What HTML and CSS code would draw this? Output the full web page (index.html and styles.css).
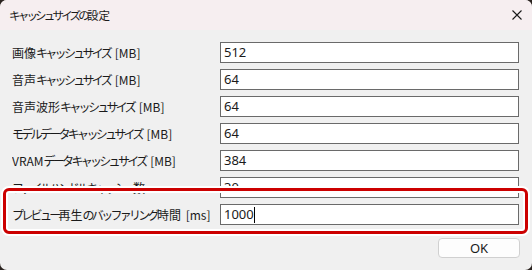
FILE: index.html
```html
<!DOCTYPE html>
<html lang="ja">
<head>
    <meta charset="UTF-8">
    <title>キャッシュサイズの設定</title>
    <link rel="stylesheet" href="styles.css">
</head>
<body>

<div class="window">
    <div class="titlebar">
        <span class="title"><span class="kana">キャッシュサイズの</span>設定</span>
        <svg class="close" width="10" height="10" viewBox="0 0 10 10">
            <path d="M0.5 0.5 L9.5 9.5 M9.5 0.5 L0.5 9.5" stroke="#1a1a1a" stroke-width="1.1" fill="none"/>
        </svg>
    </div>

    <div class="content">
        <div class="rows">
            <div class="label">画像<span class="kana">キャッシュサイズ</span> <span class="unit">[MB]</span></div>
            <div class="field">512</div>

            <div class="label">音声<span class="kana">キャッシュサイズ</span> <span class="unit">[MB]</span></div>
            <div class="field">64</div>

            <div class="label">音声波形<span class="kana">キャッシュサイズ</span> <span class="unit">[MB]</span></div>
            <div class="field">64</div>

            <div class="label"><span class="kana">モデルデータキャッシュサイズ</span> <span class="unit">[MB]</span></div>
            <div class="field">64</div>

            <div class="label">VRAM<span class="kana">データキャッシュサイズ</span> <span class="unit">[MB]</span></div>
            <div class="field">384</div>

            <div class="label"><span class="kana">ファイルハンドルキャッシュ</span>数</div>
            <div class="field">30</div>

            <div class="label"><span class="kana">プレビュー</span>再生<span class="kana">のバッファリング</span>時間 <span class="unit">[ms]</span></div>
            <div class="field">1000<span class="caret"></span></div>
        </div>

        <div class="buttons">
            <button class="btn">OK</button>
        </div>

        <!-- highlight drawn over the last row -->
        <div class="highlight"></div>
    </div>
</div>

</body>
</html>
```

FILE: styles.css
```css
html {
    background: #2b2420;
}
body {
    margin: 0;
    width: 532px;
    height: 270px;
    overflow: hidden;
    font-family: "Noto Sans CJK JP", "Noto Sans", sans-serif;
    color: #1a1a1a;
}
.window {
    width: 532px;
    height: 270px;
    border-radius: 7px;
    overflow: hidden;
    background: #f0f0f0;
}
.titlebar {
    height: 30px;
    background: #f6eef0;
    display: flex;
    align-items: center;
    justify-content: space-between;
    padding: 0 10px 0 9px;
}
.title {
    font-size: 11.5px;
    margin-top: -1px;
}
.title .kana {
    letter-spacing: -2.8px;
}
.close {
    margin-top: -1px;
}
.content {
    position: relative;
    padding: 12px 13px 0 12px;
}
.rows {
    display: grid;
    grid-template-columns: 208px 299px;
    row-gap: 6px;
    align-items: center;
}
.label {
    font-size: 12px;
    line-height: 21px;
    white-space: nowrap;
    overflow: hidden;
}
/* katakana runs are narrower in the original UI font */
.kana {
    letter-spacing: -2.7px;
}
.unit {
    margin-left: 2px;
}
.field {
    height: 21px;
    box-sizing: border-box;
    border: 1px solid #6a6a6a;
    background: #fff;
    font-family: "Noto Sans", sans-serif;
    font-size: 13px;
    line-height: 19px;
    padding-left: 3px;
    display: flex;
    align-items: center;
}
.caret {
    display: inline-block;
    width: 1px;
    height: 16px;
    background: #000;
}
.buttons {
    display: flex;
    justify-content: flex-end;
    margin-top: 13px;
}
.btn {
    width: 82px;
    height: 20px;
    box-sizing: border-box;
    border: 1px solid #d0d0d0;
    border-radius: 4px;
    background: #fdfdfd;
    font-family: "Noto Sans", sans-serif;
    font-size: 13px;
    color: #1a1a1a;
    padding: 0;
    margin-right: -1px;
}
.highlight {
    position: absolute;
    left: 3px;
    top: 158px;
    width: 525px;
    height: 46px;
    box-sizing: border-box;
    border: 3px solid #cc0000;
    border-radius: 6px;
    box-shadow: 0 0 0 2px #fff, inset 0 0 0 2px #fff;
}
```
